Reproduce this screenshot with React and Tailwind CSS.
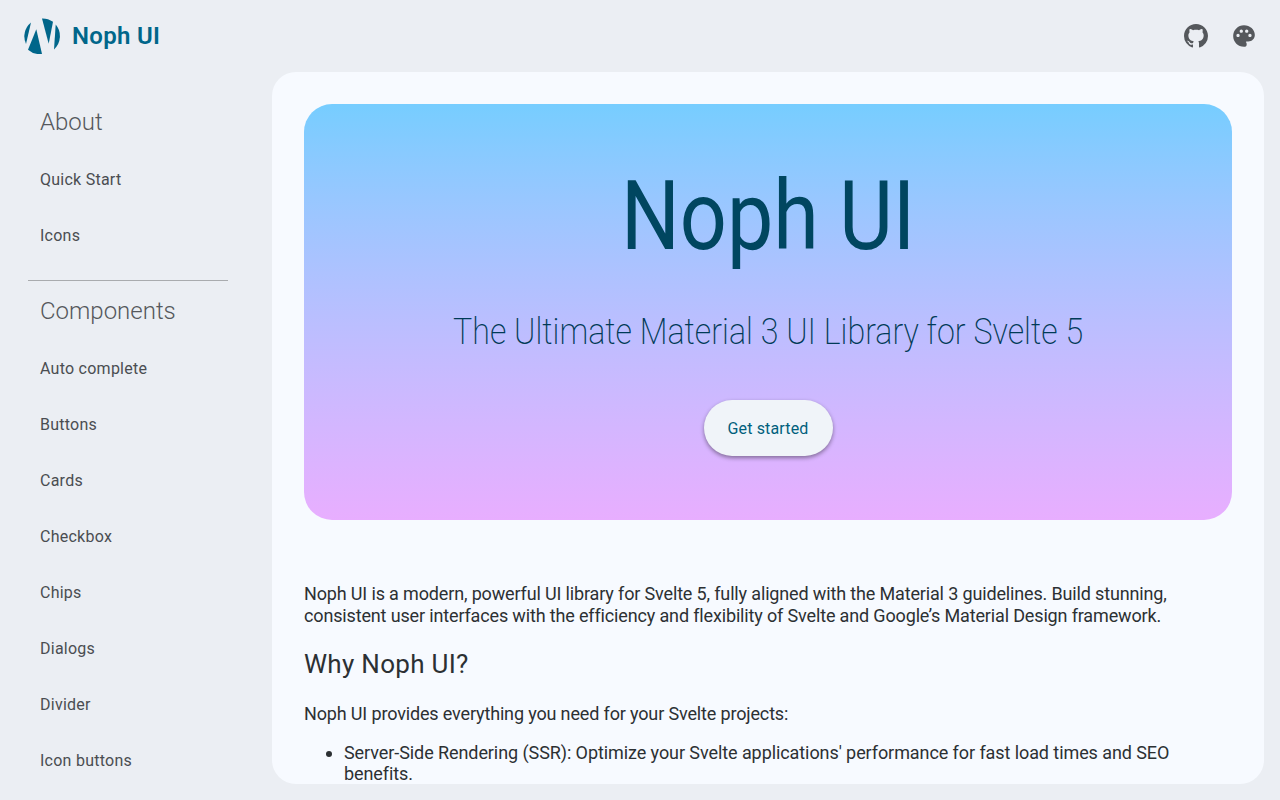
import React from "react";
import { MdPalette } from "react-icons/md";

const About = ["Quick Start", "Icons"];
const Components = [
  "Auto complete",
  "Buttons",
  "Cards",
  "Checkbox",
  "Chips",
  "Dialogs",
  "Divider",
  "Icon buttons",
];

const Logo = () => (
  <svg viewBox="0 0 36 36" className="w-9 h-9" fill="#00668a">
    <path d="M7 4.5 A18 18 0 0 0 2 26 Z" />
    <path d="M12.3 11.3 L4 31.7 A18 18 0 0 0 18 36 Z" />
    <path d="M18 0.4 A18 18 0 0 1 29 3.8 L24.7 25.7 Z" />
    <path d="M31.7 6.5 A18 18 0 0 1 30 31.4 Z" />
  </svg>
);

const GithubIcon = () => (
  <svg viewBox="0 0 16 16" className="w-6 h-6" fill="currentColor">
    <path d="M8 0c4.42 0 8 3.58 8 8a8.013 8.013 0 0 1-5.45 7.59c-.4.08-.55-.17-.55-.38 0-.27.01-1.13.01-2.2 0-.75-.25-1.23-.54-1.48 1.78-.2 3.65-.88 3.65-3.95 0-.88-.31-1.59-.82-2.15.08-.2.36-1.02-.08-2.12 0 0-.67-.22-2.2.82-.64-.18-1.32-.27-2-.27-.68 0-1.36.09-2 .27-1.53-1.03-2.2-.82-2.2-.82-.44 1.1-.16 1.92-.08 2.12-.51.56-.82 1.28-.82 2.15 0 3.06 1.86 3.75 3.64 3.95-.23.2-.44.55-.51 1.07-.46.21-1.61.55-2.33-.66-.15-.24-.6-.83-1.23-.82-.67.01-.27.38.01.53.34.19.73.9.82 1.13.16.45.68 1.31 2.69.94 0 .67.01 1.3.01 1.49 0 .21-.15.45-.55.38A7.995 7.995 0 0 1 0 8c0-4.42 3.58-8 8-8Z" />
  </svg>
);

const NavItem = ({ label }) => (
  <a className="flex items-center h-14 px-3 text-base tracking-[0.25px] text-[#4a4d51]">{label}</a>
);

const NavTitle = ({ label }) => (
  <p className="h-10 mb-[10px] px-3 flex items-center text-2xl font-[350] text-[#55585c]">{label}</p>
);

export default function App() {
  return (
    <div className="h-[800px] overflow-hidden bg-[#ebeef3] flex flex-col font-['Roboto',sans-serif]">
      <header className="h-[72px] shrink-0 flex items-center justify-between pl-6 pr-3">
        <div className="flex items-center gap-3">
          <Logo />
          <span className="text-2xl font-semibold tracking-[0.3px] text-[#00668a]">Noph UI</span>
        </div>
        <div className="flex items-center">
          <button className="w-12 h-12 flex items-center justify-center text-[#55585c]">
            <GithubIcon />
          </button>
          <button className="w-12 h-12 flex items-center justify-center text-[#55585c]">
            <MdPalette size={26} />
          </button>
        </div>
      </header>
      <div className="flex flex-1 min-h-0">
        <nav className="w-[272px] shrink-0 pl-7 pt-[30px]">
          <div className="w-[200px]">
            <NavTitle label="About" />
            {About.map((item) => (
              <NavItem key={item} label={item} />
            ))}
            <div className="border-t border-[#a9abae] mt-4 mb-[10px]" />
            <NavTitle label="Components" />
            {Components.map((item) => (
              <NavItem key={item} label={item} />
            ))}
          </div>
        </nav>
        <main className="flex-1 mr-4 mb-4 rounded-[24px] bg-[#f7faff] overflow-hidden p-8">
          <section className="h-[416px] rounded-[28px] bg-gradient-to-b from-[#76cdff] to-[#e8aeff] flex flex-col items-center">
            <h1 className="mt-[56px] text-[96px] leading-[112px] font-normal scale-x-[0.86] whitespace-nowrap text-[#004660]">Noph UI</h1>
            <h2 className="mt-[34px] text-[36px] leading-[52px] font-extralight scale-x-[0.895] whitespace-nowrap text-[#003a56]">
              The Ultimate Material 3 UI Library for Svelte 5
            </h2>
            <button className="mt-[42px] h-14 w-[129px] pt-px rounded-full bg-[#f0f4f9] text-base tracking-[0.15px] text-[#005f7d] shadow-[0_2px_4px_rgba(0,0,0,0.4)]">
              Get started
            </button>
          </section>
          <div className="mt-[63px] text-[18px] leading-[22px] tracking-[-0.15px] text-[#2c3033]">
            <p>
              Noph UI is a modern, powerful UI library for Svelte 5, fully aligned with the Material 3 guidelines. Build stunning, consistent user interfaces with the efficiency and flexibility of Svelte and Google’s Material Design framework.
            </p>
            <h3 className="mt-[21px] text-[26px] leading-[32px] tracking-[0.3px]">Why Noph UI?</h3>
            <p className="mt-[23px]">Noph UI provides everything you need for your Svelte projects:</p>
            <ul className="mt-[17px] pl-10 list-disc tracking-[-0.08px] leading-[21px]">
              <li>Server-Side Rendering (SSR): Optimize your Svelte applications' performance for fast load times and SEO benefits.</li>
            </ul>
          </div>
        </main>
      </div>
    </div>
  );
}
